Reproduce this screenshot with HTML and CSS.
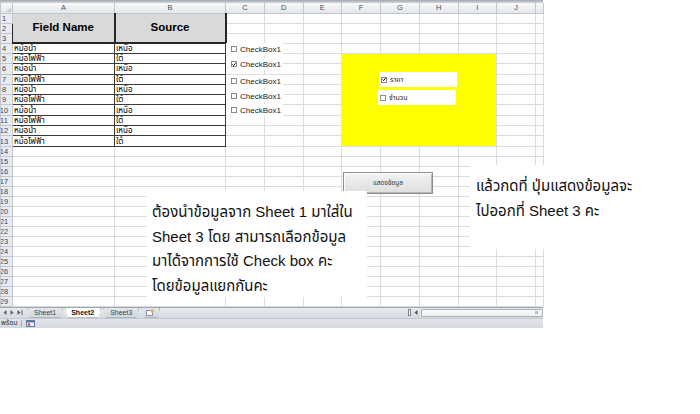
FILE: index.html
```html
<!DOCTYPE html>
<html lang="th">
<head>
<meta charset="utf-8">
<title>Sheet2</title>
<link rel="stylesheet" href="styles.css">
</head>
<body>
<div class="book">
  <div class="topline"></div>

  <table class="sheet">
    <colgroup>
      <col class="c-hd"><col class="c-a"><col class="c-b">
      <col class="c-n" span="8"><col class="c-k">
    </colgroup>
    <thead>
      <tr>
        <th class="corner"><span class="corner-tri"></span></th>
        <th>A</th><th>B</th><th>C</th><th>D</th><th>E</th><th>F</th><th>G</th><th>H</th><th>I</th><th>J</th><th></th>
      </tr>
    </thead>
    <tbody>
      <tr><th><span>1</span></th><td class="fh fh-a" rowspan="3">Field Name</td><td class="fh fh-b" rowspan="3">Source</td><td></td><td></td><td></td><td></td><td></td><td></td><td></td><td></td><td></td></tr>
      <tr><th><span>2</span></th><td></td><td></td><td></td><td></td><td></td><td></td><td></td><td></td><td></td></tr>
      <tr><th><span>3</span></th><td></td><td></td><td></td><td></td><td></td><td></td><td></td><td></td><td></td></tr>
      <tr class="tall"><th><span>4</span></th><td class="d">หม้อน้ำ</td><td class="d">เหนือ</td><td></td><td></td><td></td><td></td><td></td><td></td><td></td><td></td><td></td></tr>
      <tr class="tall"><th><span>5</span></th><td class="d">หม้อไฟฟ้า</td><td class="d">ใต้</td><td></td><td></td><td></td><td></td><td></td><td></td><td></td><td></td><td></td></tr>
      <tr class="tall"><th><span>6</span></th><td class="d">หม้อน้ำ</td><td class="d">เหนือ</td><td></td><td></td><td></td><td></td><td></td><td></td><td></td><td></td><td></td></tr>
      <tr class="tall"><th><span>7</span></th><td class="d">หม้อไฟฟ้า</td><td class="d">ใต้</td><td></td><td></td><td></td><td></td><td></td><td></td><td></td><td></td><td></td></tr>
      <tr class="tall"><th><span>8</span></th><td class="d">หม้อน้ำ</td><td class="d">เหนือ</td><td></td><td></td><td></td><td></td><td></td><td></td><td></td><td></td><td></td></tr>
      <tr class="tall"><th><span>9</span></th><td class="d">หม้อไฟฟ้า</td><td class="d">ใต้</td><td></td><td></td><td></td><td></td><td></td><td></td><td></td><td></td><td></td></tr>
      <tr class="tall"><th><span>10</span></th><td class="d">หม้อน้ำ</td><td class="d">เหนือ</td><td></td><td></td><td></td><td></td><td></td><td></td><td></td><td></td><td></td></tr>
      <tr class="tall"><th><span>11</span></th><td class="d">หม้อไฟฟ้า</td><td class="d">ใต้</td><td></td><td></td><td></td><td></td><td></td><td></td><td></td><td></td><td></td></tr>
      <tr class="tall"><th><span>12</span></th><td class="d">หม้อน้ำ</td><td class="d">เหนือ</td><td></td><td></td><td></td><td></td><td></td><td></td><td></td><td></td><td></td></tr>
      <tr class="tall"><th><span>13</span></th><td class="d">หม้อไฟฟ้า</td><td class="d">ใต้</td><td></td><td></td><td></td><td></td><td></td><td></td><td></td><td></td><td></td></tr>
      <tr><th><span>14</span></th><td></td><td></td><td></td><td></td><td></td><td></td><td></td><td></td><td></td><td></td><td></td></tr>
      <tr><th><span>15</span></th><td></td><td></td><td></td><td></td><td></td><td></td><td></td><td></td><td></td><td></td><td></td></tr>
      <tr><th><span>16</span></th><td></td><td></td><td></td><td></td><td></td><td></td><td></td><td></td><td></td><td></td><td></td></tr>
      <tr><th><span>17</span></th><td></td><td></td><td></td><td></td><td></td><td></td><td></td><td></td><td></td><td></td><td></td></tr>
      <tr><th><span>18</span></th><td></td><td></td><td></td><td></td><td></td><td></td><td></td><td></td><td></td><td></td><td></td></tr>
      <tr><th><span>19</span></th><td></td><td></td><td></td><td></td><td></td><td></td><td></td><td></td><td></td><td></td><td></td></tr>
      <tr><th><span>20</span></th><td></td><td></td><td></td><td></td><td></td><td></td><td></td><td></td><td></td><td></td><td></td></tr>
      <tr><th><span>21</span></th><td></td><td></td><td></td><td></td><td></td><td></td><td></td><td></td><td></td><td></td><td></td></tr>
      <tr><th><span>22</span></th><td></td><td></td><td></td><td></td><td></td><td></td><td></td><td></td><td></td><td></td><td></td></tr>
      <tr><th><span>23</span></th><td></td><td></td><td></td><td></td><td></td><td></td><td></td><td></td><td></td><td></td><td></td></tr>
      <tr><th><span>24</span></th><td></td><td></td><td></td><td></td><td></td><td></td><td></td><td></td><td></td><td></td><td></td></tr>
      <tr><th><span>25</span></th><td></td><td></td><td></td><td></td><td></td><td></td><td></td><td></td><td></td><td></td><td></td></tr>
      <tr><th><span>26</span></th><td></td><td></td><td></td><td></td><td></td><td></td><td></td><td></td><td></td><td></td><td></td></tr>
      <tr><th><span>27</span></th><td></td><td></td><td></td><td></td><td></td><td></td><td></td><td></td><td></td><td></td><td></td></tr>
      <tr><th><span>28</span></th><td></td><td></td><td></td><td></td><td></td><td></td><td></td><td></td><td></td><td></td><td></td></tr>
      <tr><th><span>29</span></th><td></td><td></td><td></td><td></td><td></td><td></td><td></td><td></td><td></td><td></td><td></td></tr>
    </tbody>
  </table>

  <div class="tabbar">
    <div class="nav">
      <svg width="4" height="5" viewBox="0 0 4 5"><path d="M3.5 0 L0.5 2.5 L3.5 5 Z" fill="#5a6068"/></svg>
      <svg width="4" height="5" viewBox="0 0 4 5"><path d="M0.5 0 L3.5 2.5 L0.5 5 Z" fill="#5a6068"/></svg>
      <svg width="6" height="5" viewBox="0 0 6 5"><path d="M0.5 0 L3.5 2.5 L0.5 5 Z" fill="#5a6068"/><rect x="4.5" y="0" width="1" height="5" fill="#5a6068"/></svg>
    </div>
    <div class="tabs">
      <span class="tab">Sheet1</span>
      <span class="tab tab-active">Sheet2</span>
      <span class="tab">Sheet3</span>
      <span class="tab tab-new">
        <svg width="9" height="7" viewBox="0 0 9 7"><rect x="0.5" y="1.5" width="6" height="5" fill="#fdfdfd" stroke="#8a96a6"/><circle cx="6.5" cy="2" r="1.8" fill="#e9b44a"/></svg>
      </span>
    </div>
    <div class="hscroll">
      <span class="split"></span>
      <span class="arrow">
        <svg width="4" height="5" viewBox="0 0 4 5"><path d="M3.5 0 L0.5 2.5 L3.5 5 Z" fill="#4a4f56"/></svg>
      </span>
      <span class="track"><span class="grip"></span></span>
    </div>
  </div>

  <div class="statusbar">
    <span class="ready">พร้อม</span>
    <span class="sep"></span>
    <svg class="rec" width="9" height="7" viewBox="0 0 9 7"><rect x="0.5" y="0.5" width="8" height="6" fill="#f4f6f9" stroke="#5b7aa6"/><rect x="1" y="1" width="7" height="1.5" fill="#5b7aa6"/><circle cx="3" cy="4.5" r="1.2" fill="#d0342c"/></svg>
  </div>

  <!-- form controls laid over column C -->
  <label class="ax-check" style="top:43px"><span class="box"></span>CheckBox1</label>
  <label class="ax-check" style="top:58px"><span class="box"><svg width="5" height="5" viewBox="0 0 5 5"><path d="M0.6 2.4 L2 3.9 L4.5 0.8" fill="none" stroke="#000" stroke-width="1.2"/></svg></span>CheckBox1</label>
  <label class="ax-check" style="top:75px"><span class="box"></span>CheckBox1</label>
  <label class="ax-check" style="top:90px"><span class="box"></span>CheckBox1</label>
  <label class="ax-check" style="top:104px"><span class="box"></span>CheckBox1</label>

  <!-- yellow option panel -->
  <div class="panel">
    <label class="opt opt-1"><span class="box"><svg width="5" height="5" viewBox="0 0 5 5"><path d="M0.6 2.4 L2 3.9 L4.5 0.8" fill="none" stroke="#000" stroke-width="1.2"/></svg></span>ราคา</label>
    <label class="opt"><span class="box"></span>จำนวน</label>
  </div>

  <div class="btn">แสดงข้อมูล</div>

  <div class="note note-main">ต้องนำข้อมูลจาก Sheet 1 มาใส่ใน<br>Sheet 3 โดย สามารถเลือกข้อมูล<br>มาได้จากการใช้ Check box คะ<br>โดยข้อมูลแยกกันคะ</div>

  <div class="note note-side">แล้วกดที่ ปุ่มแสดงข้อมูลจะ<br>ไปออกที่ Sheet 3 คะ</div>
</div>
</body>
</html>
```

FILE: styles.css
```css
* { box-sizing: border-box; }

html, body {
  margin: 0;
  background: #ffffff;
}

body {
  font-family: "Liberation Sans", "Noto Sans Thai", Tahoma, "DejaVu Sans", sans-serif;
  color: #111;
}

.book {
  position: relative;
  width: 543px;
}

.topline {
  height: 3px;
  background: linear-gradient(#a3a9b1, #d3d7dc);
}

/* ---------- worksheet grid ---------- */
.sheet {
  border-collapse: collapse;
  table-layout: fixed;
  width: 543px;
  font-size: 8px;
}

.c-hd { width: 12px; }
.c-a  { width: 102px; }
.c-b  { width: 111px; }
.c-n  { width: 38.75px; }
.c-k  { width: 8px; }

.sheet th,
.sheet td {
  padding: 0;
  border: 1px solid #dadcdd;
  overflow: hidden;
  white-space: nowrap;
  line-height: 9px;
}

.sheet thead tr { height: 10px; }

.sheet thead th {
  background: linear-gradient(#f8f9fa, #e3e6ea);
  border-color: #c3c7cc;
  border-top: none;
  color: #4a4f55;
  font-weight: normal;
  font-size: 7.5px;
  text-align: center;
}

.sheet .corner { position: relative; }
.corner-tri {
  position: absolute;
  right: 1px;
  bottom: 1px;
  width: 0;
  height: 0;
  border-left: 5px solid transparent;
  border-bottom: 5px solid #c9cdd2;
}

.sheet tbody tr { height: 10px; }
.sheet tbody tr.tall { height: 10.3px; }

.sheet tbody th {
  background: #e8ecf2;
  border-color: #c3c7cc;
  color: #3f444a;
  font-weight: normal;
  font-size: 7.5px;
}

/* numbers sit in a wider header that is clipped on the left */
.sheet tbody th span {
  display: block;
  width: 18px;
  margin-left: -6px;
  text-align: center;
}

.sheet td.fh {
  background: #d9d9d9;
  font-weight: bold;
  font-size: 11.5px;
  text-align: center;
  color: #000;
  border: 2px solid #262626;
  border-top-width: 1px;
}
.sheet td.fh-a { border-left-width: 1px; }

.sheet td.d {
  border: 1px solid #3a3a3a;
  padding-left: 1px;
  font-size: 8px;
  color: #000;
}

/* ---------- sheet tabs ---------- */
.tabbar {
  height: 11px;
  display: flex;
  align-items: stretch;
  background: linear-gradient(#e8ebee, #d6dbe1);
  border-top: 1px solid #9ea5ae;
  font-size: 7px;
  color: #3a3f45;
}

.nav {
  width: 27px;
  display: flex;
  align-items: center;
  gap: 3px;
  padding-left: 3px;
}

.tabs {
  display: flex;
  align-items: stretch;
}

.tab {
  display: flex;
  align-items: center;
  padding: 0 6px;
  margin-right: 2px;
  background: linear-gradient(#e4e8ec, #d2d7dd);
  border: 1px solid #a5acb5;
  border-top: none;
  clip-path: polygon(0 0, 100% 0, calc(100% - 3px) 100%, 3px 100%);
}

.tab-active {
  background: #ffffff;
  font-weight: bold;
  color: #111;
  padding: 0 6px 0 5px;
}

.tab-new { padding: 0 4px; }

.hscroll {
  margin-left: auto;
  width: 135px;
  display: flex;
  align-items: center;
  gap: 1px;
}

.split {
  width: 3px;
  height: 7px;
  border: 1px solid #7e858d;
  background: #f1f2f4;
}

.arrow {
  width: 8px;
  display: flex;
  justify-content: center;
}

.track {
  flex: 1;
  height: 8px;
  background: linear-gradient(#fbfbfc, #eceef1);
  border: 1px solid #a9b0b8;
  border-radius: 1px;
  display: flex;
  justify-content: flex-end;
  align-items: center;
  padding-right: 4px;
}

.grip {
  width: 3px;
  height: 3px;
  background: #b6bcc4;
}

/* ---------- status bar ---------- */
.statusbar {
  height: 10px;
  display: flex;
  align-items: center;
  background: linear-gradient(#e2e6eb, #d3d8de);
  border-top: 1px solid #c4c9cf;
  font-size: 7px;
  color: #333;
}

.ready { margin-left: 1px; }

.sep {
  width: 1px;
  height: 7px;
  background: #a7aeb6;
  margin: 0 4px 0 3px;
}

/* ---------- controls over the sheet ---------- */
.ax-check {
  position: absolute;
  left: 226px;
  width: 57px;
  height: 12px;
  background: #ffffff;
  display: flex;
  align-items: center;
  gap: 3px;
  padding-left: 5px;
  font-size: 8px;
  color: #1a1a1a;
}

.box {
  width: 6px;
  height: 6px;
  border: 1px solid #8a8a8a;
  background: #fff;
  display: flex;
  align-items: center;
  justify-content: center;
  flex: none;
}

.box svg { display: block; }

.panel {
  position: absolute;
  left: 341px;
  top: 54px;
  width: 155px;
  height: 92px;
  background: #ffff00;
  display: flex;
  flex-direction: column;
  gap: 3px;
  padding: 18px 0 0 37px;
}

.opt {
  width: 78px;
  height: 15px;
  background: #ffffff;
  display: flex;
  align-items: center;
  gap: 3px;
  padding-left: 2px;
  font-size: 7px;
  color: #222;
}

.opt-1 { margin-left: 1px; }

.btn {
  position: absolute;
  left: 343px;
  top: 172px;
  width: 90px;
  height: 22px;
  display: flex;
  align-items: center;
  justify-content: center;
  background: linear-gradient(#f3f3f3, #dedede);
  border: 1px solid #8d8d8d;
  box-shadow: inset 1px 1px 0 #ffffff, inset -1px -1px 0 #b5b5b5;
  font-size: 6.5px;
  color: #333;
}

.note {
  position: absolute;
  background: #ffffff;
  font-size: 15px;
  color: #111;
  white-space: nowrap;
}

.note-main {
  left: 147px;
  top: 191px;
  width: 220px;
  height: 106px;
  padding: 9px 0 0 5px;
  line-height: 24.5px;
}

.note-side {
  left: 470px;
  top: 165px;
  width: 230px;
  height: 84px;
  padding: 8px 0 0 6px;
  line-height: 25px;
}
```
